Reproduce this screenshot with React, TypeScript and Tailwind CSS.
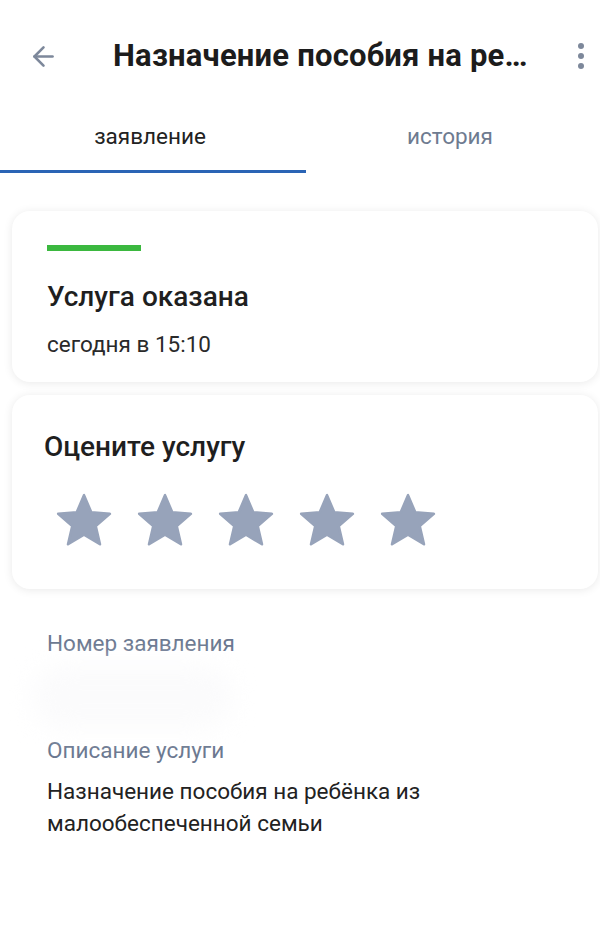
import { ArrowLeft } from "lucide-react";

const font = { fontFamily: "Roboto, 'Noto Sans', sans-serif" };

function Star() {
  return (
    <svg viewBox="0 0 24 24" className="w-[62px] h-[62px]">
      <path
        d="M12 17.27L18.18 21l-1.64-7.03L22 9.24l-7.19-.61L12 2 9.19 8.63 2 9.24l5.46 4.73L5.82 21z"
        fill="#97a3ba"
        stroke="#97a3ba"
        strokeWidth="1"
        strokeLinejoin="round"
      />
    </svg>
  );
}

export default function App() {
  return (
    <div className="w-[600px] h-[932px] bg-white overflow-hidden text-[#1f1f1f]" style={font}>
      {/* Header */}
      <div className="flex items-center h-[56px] mt-[28px] pl-[28px] pr-[14px]">
        <ArrowLeft className="w-[31px] h-[31px] text-[#7d889b]" strokeWidth={2} />
        <h1 className="ml-[54px] w-[416px] truncate text-[31px] tracking-[0.2px] font-bold text-[#1c1c1c]">
          Назначение пособия на ребёнка из малообеспеченной семьи
        </h1>
        <div className="ml-auto flex flex-col gap-[4px] items-center w-[10px]">
          <span className="w-[6px] h-[6px] rounded-full bg-[#7d889b]" />
          <span className="w-[6px] h-[6px] rounded-full bg-[#7d889b]" />
          <span className="w-[6px] h-[6px] rounded-full bg-[#7d889b]" />
        </div>
      </div>

      {/* Tabs */}
      <div className="grid grid-cols-2 mt-[20px]">
        <div className="flex flex-col">
          <div className="h-[66px] flex items-center justify-center text-[22.5px] text-[#222]">заявление</div>
          <div className="h-[3px] bg-[#2a64b5] mr-[-6px]" />
        </div>
        <div className="flex flex-col">
          <div className="h-[66px] flex items-center justify-center text-[22.5px] text-[#6e7b90]">история</div>
        </div>
      </div>

      {/* Status card */}
      <div className="ml-[12px] mr-[2px] mt-[38px] rounded-[18px] bg-white shadow-[0_1px_10px_rgba(0,0,0,0.09)] px-[35px] pt-[34px] pb-[24px]">
        <div className="w-[94px] h-[6px] bg-[#3bb83f]" />
        <div className="mt-[29px] text-[28px] font-medium leading-[34px]">Услуга оказана</div>
        <div className="mt-[16px] text-[22.5px] leading-[28px] text-[#2a2a2a]">сегодня в 15:10</div>
      </div>

      {/* Rating card */}
      <div className="ml-[12px] mr-[2px] mt-[13px] rounded-[18px] bg-white shadow-[0_1px_10px_rgba(0,0,0,0.09)] px-[32px] pt-[35px] pb-[37px]">
        <div className="text-[28px] font-medium leading-[34px]">Оцените услугу</div>
        <div className="flex gap-[19px] mt-[26px] ml-[9px]">
          <Star />
          <Star />
          <Star />
          <Star />
          <Star />
        </div>
      </div>

      {/* Details */}
      <div className="px-[47px] mt-[40px]">
        <div className="text-[22.5px] leading-[28px] text-[#6b7890]">Номер заявления</div>
        <div className="mt-[8px] h-[64px] w-[200px] rounded-full bg-[#fbfbfc] blur-md -ml-[15px]" />
        <div className="mt-[7px] text-[22.5px] leading-[28px] text-[#6b7890]">Описание услуги</div>
        <div className="mt-[11px] text-[22.5px] leading-[32px] text-[#222]">
          Назначение пособия на ребёнка из
          <br />
          малообеспеченной семьи
        </div>
      </div>
    </div>
  );
}
